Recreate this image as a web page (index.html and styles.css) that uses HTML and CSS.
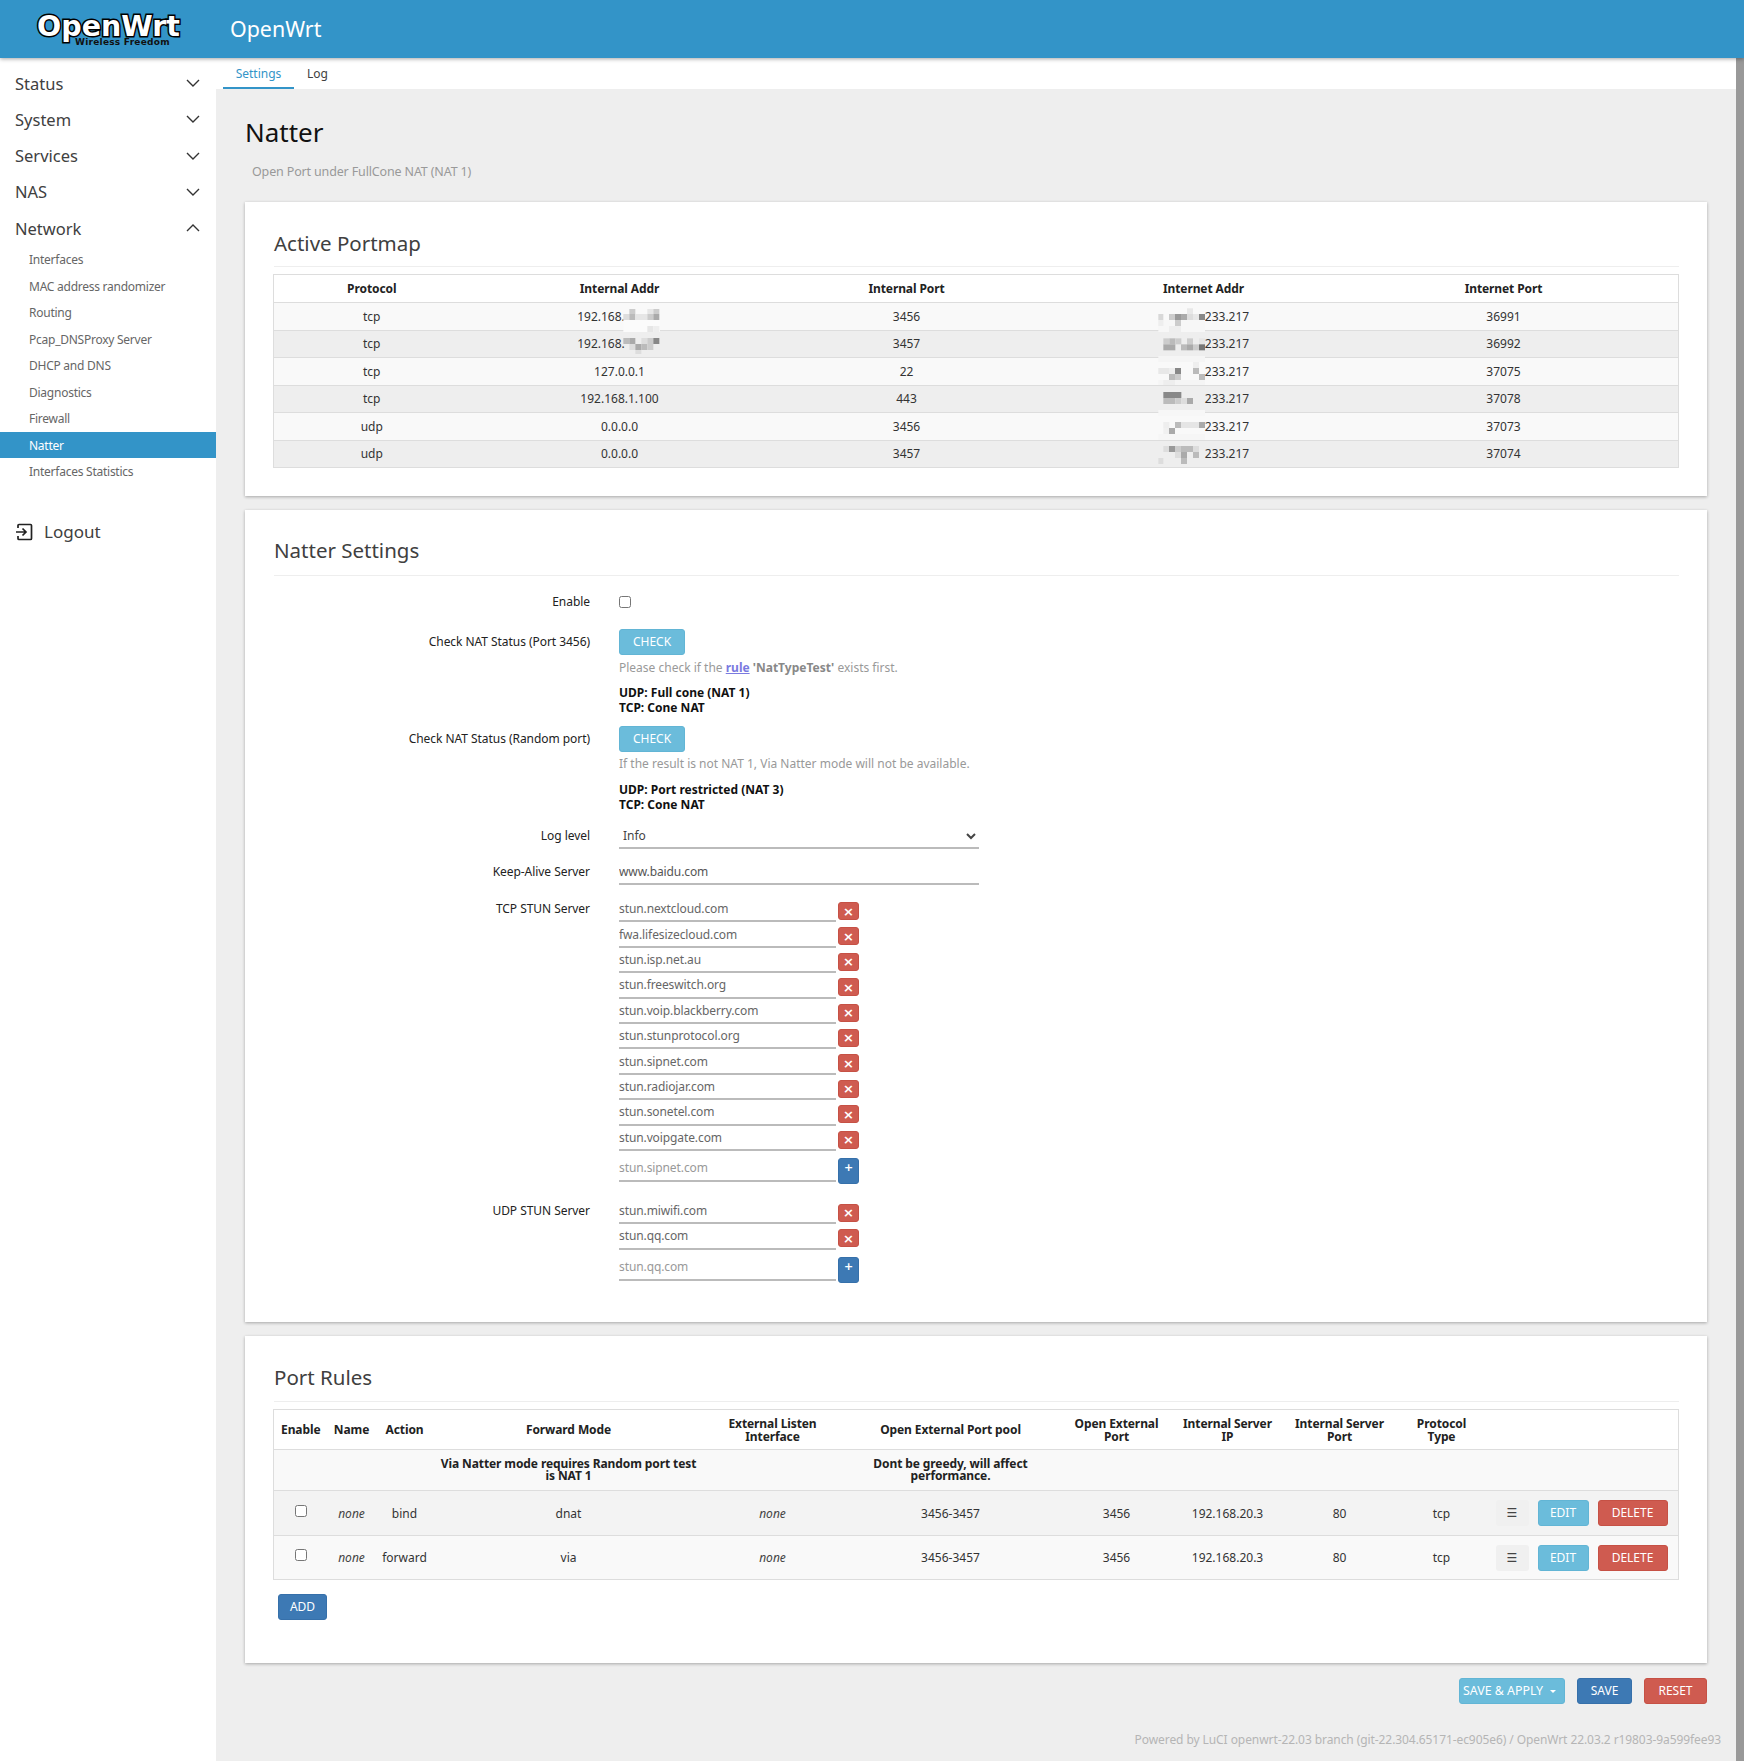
FILE: index.html
```html
<!DOCTYPE html>
<html lang="en">
<head>
<meta charset="utf-8">
<title>Natter - OpenWrt</title>
<link rel="stylesheet" href="styles.css">
</head>
<body>
<header class="topbar">
  <a class="logo"><span class="logo-main">OpenWrt</span><span class="logo-sub">Wireless Freedom</span></a>
  <span class="hostname">OpenWrt</span>
</header>
<div class="shell">
  <nav class="sidebar">
    <ul class="menu">
      <li class="menu-item">Status<svg class="chev" viewBox="0 0 14 8"><polyline points="1,1 7,7 13,1"/></svg></li>
      <li class="menu-item">System<svg class="chev" viewBox="0 0 14 8"><polyline points="1,1 7,7 13,1"/></svg></li>
      <li class="menu-item">Services<svg class="chev" viewBox="0 0 14 8"><polyline points="1,1 7,7 13,1"/></svg></li>
      <li class="menu-item">NAS<svg class="chev" viewBox="0 0 14 8"><polyline points="1,1 7,7 13,1"/></svg></li>
      <li class="menu-item">Network<svg class="chev" viewBox="0 0 14 8"><polyline points="1,7 7,1 13,7"/></svg></li>
    </ul>
    <ul class="submenu">
      <li>Interfaces</li>
      <li>MAC address randomizer</li>
      <li>Routing</li>
      <li>Pcap_DNSProxy Server</li>
      <li>DHCP and DNS</li>
      <li>Diagnostics</li>
      <li>Firewall</li>
      <li class="active">Natter</li>
      <li>Interfaces Statistics</li>
    </ul>
    <div class="logout">
      <svg class="logout-icon" viewBox="0 0 18 18"><path d="M3 5V2.500A1 1 0 0 1 4 1.500H15.500A1 1 0 0 1 16.500 2.500V15.500A1 1 0 0 1 15.500 16.500H4A1 1 0 0 1 3 15.500V13"/><path d="M1 9H11M7.500 5.500L11 9L7.500 12.500"/></svg>
      <span>Logout</span>
    </div>
  </nav>
  <main class="main">
    <ul class="tabs">
      <li class="tab tab-active">Settings</li>
      <li class="tab">Log</li>
    </ul>
    <div class="content">
      <h2 class="page-title">Natter</h2>
      <p class="page-desc">Open Port under FullCone NAT (NAT 1)</p>

      <section class="card card-portmap">
        <h3 class="card-title">Active Portmap</h3>
        <div class="table-wrap">
          <table class="table portmap">
            <colgroup><col class="p1"><col class="p2"><col class="p3"><col class="p4"><col class="p5"><col class="p6"></colgroup>
            <thead><tr><th>Protocol</th><th>Internal Addr</th><th>Internal Port</th><th>Internet Addr</th><th>Internet Port</th><th></th></tr></thead>
            <tbody>
              <tr><td>tcp</td><td>192.168.<span class="mask-a"></span></td><td>3456</td><td><span class="mask-b"></span>233.217</td><td>36991</td><td></td></tr>
              <tr><td>tcp</td><td>192.168.<span class="mask-a"></span></td><td>3457</td><td><span class="mask-b"></span>233.217</td><td>36992</td><td></td></tr>
              <tr><td>tcp</td><td>127.0.0.1</td><td>22</td><td><span class="mask-b"></span>233.217</td><td>37075</td><td></td></tr>
              <tr><td>tcp</td><td>192.168.1.100</td><td>443</td><td><span class="mask-b"></span>233.217</td><td>37078</td><td></td></tr>
              <tr><td>udp</td><td>0.0.0.0</td><td>3456</td><td><span class="mask-b"></span>233.217</td><td>37073</td><td></td></tr>
              <tr><td>udp</td><td>0.0.0.0</td><td>3457</td><td><span class="mask-b"></span>233.217</td><td>37074</td><td></td></tr>
            </tbody>
          </table>
          <svg class="mosaic mosaic-lan" viewBox="0 0 300 180">
            <rect x="160" y="60" width="110" height="36" fill="#fbfbfb"/>
            <g>
              <rect x="178" y="27" width="18" height="15" fill="#ccc"/><rect x="160" y="42" width="18" height="18" fill="#ddd"/><rect x="178" y="42" width="18" height="18" fill="#bbb"/><rect x="196" y="42" width="36" height="18" fill="#e6e6e6"/><rect x="232" y="27" width="18" height="15" fill="#e6e6e6"/><rect x="232" y="42" width="18" height="18" fill="#ccc"/><rect x="250" y="27" width="18" height="15" fill="#ccc"/><rect x="250" y="42" width="18" height="18" fill="#aaa"/>
              <rect x="232" y="78" width="18" height="18" fill="#e6e6e6"/><rect x="250" y="78" width="18" height="18" fill="#eee"/>
              <rect x="160" y="114" width="18" height="18" fill="#bbb"/><rect x="178" y="114" width="18" height="18" fill="#aaa"/><rect x="214" y="114" width="18" height="18" fill="#ddd"/><rect x="232" y="114" width="18" height="18" fill="#ccc"/><rect x="250" y="114" width="18" height="18" fill="#888"/>
              <rect x="178" y="132" width="18" height="18" fill="#ddd"/><rect x="196" y="132" width="18" height="18" fill="#aaa"/><rect x="214" y="132" width="18" height="18" fill="#bbb"/><rect x="232" y="132" width="18" height="18" fill="#ccc"/><rect x="196" y="150" width="18" height="12" fill="#ddd"/>
            </g>
          </svg>
          <svg class="mosaic mosaic-wan" viewBox="0 0 210 510">
            <rect x="25" y="60" width="140" height="36" fill="#f7f7f7"/><rect x="25" y="168" width="140" height="18" fill="#f5f5f5"/><rect x="25" y="240" width="140" height="15" fill="#f5f5f5"/><rect x="25" y="330" width="140" height="18" fill="#f7f7f7"/><rect x="25" y="402" width="140" height="18" fill="#f6f6f6"/>
            <rect x="25" y="42" width="15" height="18" fill="#d8d8d8"/><rect x="57" y="42" width="18" height="18" fill="#ccc"/><rect x="75" y="42" width="18" height="18" fill="#999"/><rect x="93" y="42" width="18" height="18" fill="#aaa"/><rect x="111" y="25" width="18" height="17" fill="#e8e8e8"/><rect x="111" y="42" width="18" height="18" fill="#ddd"/><rect x="129" y="42" width="18" height="18" fill="#e8e8e8"/><rect x="147" y="42" width="18" height="18" fill="#888"/><rect x="75" y="60" width="18" height="18" fill="#ccc"/><rect x="25" y="60" width="15" height="18" fill="#eee"/>
            <rect x="57" y="78" width="36" height="18" fill="#eee"/>
            <rect x="40" y="115" width="18" height="18" fill="#ccc"/><rect x="58" y="115" width="18" height="18" fill="#bbb"/><rect x="76" y="115" width="18" height="18" fill="#ccc"/><rect x="111" y="115" width="18" height="18" fill="#ccc"/><rect x="147" y="115" width="18" height="18" fill="#e5e5e5"/><rect x="40" y="133" width="36" height="18" fill="#aaa"/><rect x="93" y="133" width="18" height="18" fill="#bbb"/><rect x="111" y="133" width="18" height="18" fill="#aaa"/><rect x="129" y="133" width="18" height="18" fill="#ccc"/><rect x="147" y="133" width="18" height="18" fill="#777"/>
            <rect x="25" y="204" width="32" height="18" fill="#e8e8e8"/><rect x="57" y="204" width="18" height="18" fill="#eee"/><rect x="75" y="204" width="18" height="18" fill="#888"/><rect x="129" y="204" width="18" height="18" fill="#bbb"/><rect x="129" y="186" width="18" height="18" fill="#eee"/><rect x="57" y="222" width="18" height="18" fill="#bbb"/><rect x="75" y="222" width="18" height="18" fill="#ccc"/><rect x="147" y="222" width="18" height="18" fill="#bbb"/><rect x="40" y="240" width="35" height="15" fill="#eee"/>
            <rect x="40" y="276" width="54" height="18" fill="#888"/><rect x="40" y="294" width="36" height="18" fill="#bbb"/><rect x="76" y="294" width="18" height="18" fill="#ccc"/><rect x="94" y="294" width="17" height="18" fill="#ddd"/><rect x="111" y="294" width="18" height="18" fill="#aaa"/>
            <rect x="40" y="366" width="18" height="18" fill="#eee"/><rect x="75" y="366" width="18" height="18" fill="#bbb"/><rect x="93" y="366" width="54" height="18" fill="#e5e5e5"/><rect x="147" y="366" width="18" height="18" fill="#aaa"/><rect x="57" y="384" width="18" height="18" fill="#aaa"/><rect x="40" y="384" width="17" height="18" fill="#f0f0f0"/>
            <rect x="40" y="438" width="17" height="18" fill="#ddd"/><rect x="57" y="438" width="18" height="18" fill="#999"/><rect x="75" y="438" width="18" height="18" fill="#ccc"/><rect x="93" y="438" width="36" height="18" fill="#bbb"/><rect x="129" y="438" width="18" height="18" fill="#ddd"/><rect x="75" y="456" width="18" height="18" fill="#ddd"/><rect x="93" y="456" width="18" height="18" fill="#aaa"/><rect x="129" y="456" width="18" height="18" fill="#bbb"/><rect x="25" y="474" width="15" height="18" fill="#ddd"/><rect x="93" y="474" width="18" height="18" fill="#bbb"/>
          </svg>
        </div>
      </section>

      <section class="card card-settings">
        <h3 class="card-title card-title-settings">Natter Settings</h3>
        <div class="field field-enable">
          <label class="field-label">Enable</label>
          <div class="field-body"><input class="check" type="checkbox"></div>
        </div>
        <div class="field field-nat1">
          <label class="field-label label-btn">Check NAT Status (Port 3456)</label>
          <div class="field-body">
            <button class="btn btn-info btn-check">CHECK</button>
            <div class="help help-1">Please check if the <a class="help-link">rule</a> <b>'NatTypeTest'</b> exists first.</div>
            <div class="nat-result result-1">UDP: Full cone (NAT 1)<br>TCP: Cone NAT</div>
          </div>
        </div>
        <div class="field field-nat2">
          <label class="field-label label-btn">Check NAT Status (Random port)</label>
          <div class="field-body">
            <button class="btn btn-info btn-check">CHECK</button>
            <div class="help help-2">If the result is not NAT 1, Via Natter mode will not be available.</div>
            <div class="nat-result result-2">UDP: Port restricted (NAT 3)<br>TCP: Cone NAT</div>
          </div>
        </div>
        <div class="field field-log">
          <label class="field-label label-btn">Log level</label>
          <div class="field-body"><select class="select"><option>Info</option></select></div>
        </div>
        <div class="field field-keep">
          <label class="field-label label-btn">Keep-Alive Server</label>
          <div class="field-body"><input class="text wide" value="www.baidu.com"></div>
        </div>
        <div class="field field-tcp">
          <label class="field-label label-list">TCP STUN Server</label>
          <div class="field-body">
            <div class="dyn"><input class="text dyn-input" value="stun.nextcloud.com"><button class="dyn-btn dyn-rm">×</button></div>
            <div class="dyn"><input class="text dyn-input" value="fwa.lifesizecloud.com"><button class="dyn-btn dyn-rm">×</button></div>
            <div class="dyn"><input class="text dyn-input" value="stun.isp.net.au"><button class="dyn-btn dyn-rm">×</button></div>
            <div class="dyn"><input class="text dyn-input" value="stun.freeswitch.org"><button class="dyn-btn dyn-rm">×</button></div>
            <div class="dyn"><input class="text dyn-input" value="stun.voip.blackberry.com"><button class="dyn-btn dyn-rm">×</button></div>
            <div class="dyn"><input class="text dyn-input" value="stun.stunprotocol.org"><button class="dyn-btn dyn-rm">×</button></div>
            <div class="dyn"><input class="text dyn-input" value="stun.sipnet.com"><button class="dyn-btn dyn-rm">×</button></div>
            <div class="dyn"><input class="text dyn-input" value="stun.radiojar.com"><button class="dyn-btn dyn-rm">×</button></div>
            <div class="dyn"><input class="text dyn-input" value="stun.sonetel.com"><button class="dyn-btn dyn-rm">×</button></div>
            <div class="dyn"><input class="text dyn-input" value="stun.voipgate.com"><button class="dyn-btn dyn-rm">×</button></div>
            <div class="dyn dyn-add"><input class="text dyn-input" placeholder="stun.sipnet.com"><button class="dyn-btn dyn-plus">+</button></div>
          </div>
        </div>
        <div class="field field-udp">
          <label class="field-label label-list">UDP STUN Server</label>
          <div class="field-body">
            <div class="dyn"><input class="text dyn-input" value="stun.miwifi.com"><button class="dyn-btn dyn-rm">×</button></div>
            <div class="dyn"><input class="text dyn-input" value="stun.qq.com"><button class="dyn-btn dyn-rm">×</button></div>
            <div class="dyn dyn-add"><input class="text dyn-input" placeholder="stun.qq.com"><button class="dyn-btn dyn-plus">+</button></div>
          </div>
        </div>
      </section>

      <section class="card card-rules">
        <h3 class="card-title">Port Rules</h3>
        <table class="table rules">
          <colgroup><col class="r1"><col class="r2"><col class="r3"><col class="r4"><col class="r5"><col class="r6"><col class="r7"><col class="r8"><col class="r9"><col class="r10"><col class="r11"></colgroup>
          <thead>
            <tr><th>Enable</th><th>Name</th><th>Action</th><th>Forward Mode</th><th>External Listen<br>Interface</th><th>Open External Port pool</th><th>Open External<br>Port</th><th>Internal Server<br>IP</th><th>Internal Server<br>Port</th><th>Protocol<br>Type</th><th></th></tr>
          </thead>
          <tbody>
            <tr class="desc-row"><td></td><td></td><td></td><td class="wide-desc">Via Natter mode requires Random port test<br>is NAT 1</td><td></td><td>Dont be greedy, will affect<br>performance.</td><td></td><td></td><td></td><td></td><td></td></tr>
            <tr class="rule-row rule-a"><td><input class="check" type="checkbox"></td><td><em>none</em></td><td>bind</td><td>dnat</td><td><em>none</em></td><td>3456-3457</td><td>3456</td><td>192.168.20.3</td><td>80</td><td>tcp</td><td class="row-actions"><span class="handle">☰</span><button class="btn btn-info btn-edit">EDIT</button><button class="btn btn-danger btn-delete">DELETE</button></td></tr>
            <tr class="rule-row rule-b"><td><input class="check" type="checkbox"></td><td><em>none</em></td><td>forward</td><td>via</td><td><em>none</em></td><td>3456-3457</td><td>3456</td><td>192.168.20.3</td><td>80</td><td>tcp</td><td class="row-actions"><span class="handle">☰</span><button class="btn btn-info btn-edit">EDIT</button><button class="btn btn-danger btn-delete">DELETE</button></td></tr>
          </tbody>
        </table>
        <button class="btn btn-primary btn-add">ADD</button>
      </section>

      <div class="page-actions">
        <button class="btn btn-info btn-apply">SAVE &amp; APPLY<span class="caret"></span></button>
        <button class="btn btn-primary btn-save">SAVE</button>
        <button class="btn btn-danger btn-reset">RESET</button>
      </div>
    </div>
    <footer class="footer">Powered by LuCI openwrt-22.03 branch (git-22.304.65171-ec905e6) / OpenWrt 22.03.2 r19803-9a599fee93</footer>
  </main>
  <div class="scrollbar"></div>
</div>
</body>
</html>
```
FILE: styles.css
```css
* { box-sizing: border-box; }
html, body { margin: 0; padding: 0; }
body {
  width: 1744px;
  height: 1761px;
  overflow: hidden;
  background: #fff;
  font-family: "Noto Sans", "Open Sans", sans-serif;
  font-size: 12px;
  color: #404040;
}
ul { list-style: none; margin: 0; padding: 0; }

/* header */
.topbar {
  position: relative;
  z-index: 2;
  height: 58px;
  background: #3394c8;
  box-shadow: 0 1px 4px rgba(0,0,0,.35);
  display: flex;
  align-items: center;
  color: #fff;
}
.logo { position: relative; display: block; width: 230px; height: 58px; flex: none; }
.logo-main {
  position: absolute;
  left: 37px;
  top: 8px;
  font: bold 28.5px/38px "DejaVu Sans", sans-serif;
  color: #fff;
  -webkit-text-stroke: 3px #000;
  paint-order: stroke fill;
}
.logo-sub {
  position: absolute;
  left: 75px;
  top: 36px;
  font: bold 9px/12px "DejaVu Sans", sans-serif;
  letter-spacing: .25px;
  color: #111;
  white-space: nowrap;
}
.hostname { font-size: 21.4px; line-height: 28px; }

/* layout */
.shell { display: flex; height: 1703px; }
.sidebar { width: 216px; flex: none; padding-top: 7px; background: #fff; }
.main { width: 1520px; flex: none; background: #eee; }
.scrollbar { width: 8px; flex: none; background: #999; }

/* sidebar */
.menu-item {
  height: 36.25px;
  padding-left: 15px;
  display: flex;
  align-items: center;
  justify-content: space-between;
  font-size: 16.5px;
  color: #404040;
}
.chev { width: 14px; height: 8px; margin-right: 16px; fill: none; stroke: #333; stroke-width: 1.4; }
.submenu li {
  height: 26.5px;
  padding: 1px 0 0 29px;
  line-height: 26.5px;
  font-size: 12px;
  letter-spacing: -.25px;
  color: #666;
}
.submenu li.active { background: #3394c8; color: #fff; }
.logout {
  margin-top: 29px;
  height: 36px;
  padding-left: 15px;
  display: flex;
  align-items: center;
  gap: 11px;
  font-size: 17px;
  color: #404040;
}
.logout-icon { width: 18px; height: 18px; fill: none; stroke: #222; stroke-width: 1.7; }

/* tabs */
.tabs { display: flex; height: 31px; padding-left: 7px; background: #fff; }
.tab { padding: 1px 14px 0; line-height: 30px; font-size: 12px; color: #404040; }
.tab-active { width: 71px; text-align: center; padding: 1px 0 0; margin-right: 13px; color: #3394c8; border-bottom: 2px solid #3394c8; }
.tab:last-child { padding: 1px 0 0; }

/* content */
.content { padding: 0 29px; }
.page-title { margin: 26px 0 0; font-size: 26px; line-height: 34px; font-weight: 400; color: #111; }
.page-desc { margin: 14px 0 0 7px; font-size: 12.5px; letter-spacing: -.15px; line-height: 18px; color: #999; }
.card { background: #fff; padding: 28px 28px 0; box-shadow: 0 1px 3px rgba(0,0,0,.3); }
.card-portmap { margin-top: 21px; padding-bottom: 28px; }
.card-settings { margin-top: 14px; padding-top: 27px; padding-bottom: 38px; height: 812px; }
.card-rules { margin-top: 14px; height: 327px; }
.card-title {
  margin: 0 0 7px 1px;
  font-size: 20.5px;
  line-height: 26px;
  font-weight: 400;
  padding-bottom: 10px;
  border-bottom: 1px solid #eee;
  color: #404040;
}
.card-title-settings { margin-bottom: 0; padding-bottom: 12px; }
.card-rules .card-title { padding-bottom: 11px; }

/* tables */
.table-wrap { position: relative; }
.table {
  width: 1405px;
  table-layout: fixed;
  border-collapse: collapse;
  font-size: 12px;
  color: #333;
  border: 1px solid #ddd;
}
.table th { font-weight: 700; text-align: center; padding: 0; color: #222; letter-spacing: -.1px; }
.table td { text-align: center; padding: 0; }
.portmap th { height: 28px; border-bottom: 1px solid #ddd; }
.portmap td { height: 27.5px; border-bottom: 1px solid #ddd; }
.portmap tbody tr:nth-child(odd) { background: #f9f9f9; }
.portmap tbody tr:nth-child(even) { background: #eee; }
.p1 { width: 196px; } .p2 { width: 300px; } .p3 { width: 274px; } .p4 { width: 320px; } .p5 { width: 280px; } .p6 { width: 35px; }
.mask-a { display: inline-block; width: 37px; }
.mask-b { display: inline-block; width: 47px; }
.mosaic { position: absolute; pointer-events: none; }
.mosaic-lan { left: 297px; top: 26px; width: 100px; height: 60px; }
.mosaic-wan { left: 877px; top: 26px; width: 70px; height: 170px; }

.rules th { height: 40px; line-height: 13px; border-bottom: 1px solid #ddd; }
.rules td { border-bottom: 1px solid #ddd; }
.desc-row { background: #f9f9f9; }
.desc-row td { height: 41px; font-weight: 700; line-height: 12.5px; color: #222; letter-spacing: -.1px; }
.rule-a { background: #f3f3f3; }
.rule-b { background: #f9f9f9; }
.rule-a td { height: 45px; }
.rule-b td { height: 44px; }
.rule-row em { font-style: italic; color: #444; }
.r1 { width: 54px; } .r2 { width: 48px; } .r3 { width: 58px; } .r4 { width: 270px; } .r5 { width: 138px; } .r6 { width: 218px; }
.r7 { width: 114px; } .r8 { width: 108px; } .r9 { width: 116px; } .r10 { width: 88px; } .r11 { width: 193px; }
.rule-row .check { position: relative; top: -1px; }
.rules .row-actions { text-align: left; padding-left: 10px; white-space: nowrap; font-size: 0; }
.handle {
  display: inline-block;
  width: 33px;
  height: 26px;
  margin-right: 9px;
  background: #f0f0f0;
  border-radius: 3px;
  text-align: center;
  font: 12px/26px "DejaVu Sans", sans-serif;
  color: #444;
  vertical-align: middle;
}

/* buttons */
.btn {
  display: inline-block;
  height: 26px;
  padding: 0;
  border: 1px solid transparent;
  border-radius: 3px;
  color: #fff;
  font: 12px/24px "Noto Sans", sans-serif;
  text-align: center;
  vertical-align: middle;
}
.btn-info { background: #6bbcdb; border-color: #62b5d5; }
.btn-primary { background: #3d79b4; border-color: #3670aa; }
.btn-danger { background: #cf5b50; border-color: #c65145; }
.btn-check { width: 66px; display: block; }
.btn-edit { width: 51px; margin-right: 9px; }
.btn-delete { width: 70px; }
.btn-add { width: 49px; margin: 14px 0 0 5px; display: block; }
.btn-apply { width: 106px; text-align: left; padding-left: 3px; font-size: 12.4px; }
.btn-save { width: 55px; }
.btn-reset { width: 63px; }
.caret { display: inline-block; margin-left: 7px; border: 3px solid transparent; border-top-color: #fff; border-bottom-width: 0; vertical-align: middle; }
.page-actions { margin-top: 15px; display: flex; justify-content: flex-end; gap: 12px; }
.footer { margin-top: 27px; padding-right: 15px; text-align: right; font-size: 12px; letter-spacing: -.08px; line-height: 18px; color: #b5b5b5; }

/* form */
.field { display: grid; grid-template-columns: 317px 1fr; column-gap: 29px; font-size: 12px; color: #333; }
.field-label { text-align: right; line-height: 16px; color: #222; letter-spacing: -.05px; }
.label-btn { line-height: 26px; }
.label-list { line-height: 24px; }
.field-enable { margin-top: 18px; }
.field-enable .field-body { display: flex; align-items: center; height: 16px; }
.check { width: 12px; height: 12px; margin: 0; }
.field-nat1 { margin-top: 19px; }
.field-nat2 { margin-top: 11px; }
.field-log { margin-top: 11px; }
.field-keep { margin-top: 10px; }
.field-tcp { margin-top: 12px; }
.field-udp { margin-top: 15px; }
.help { line-height: 18px; color: #999; }
.help b { color: #888; }
.help-link { color: #7a7ae0; font-weight: 700; text-decoration: underline; }
.help-1 { margin-top: 4px; }
.help-2 { margin-top: 3px; }
.nat-result { font-weight: 700; line-height: 15px; color: #111; }
.result-1 { margin-top: 8px; }
.result-2 { margin-top: 9px; }
.select {
  display: block;
  width: 360px;
  height: 26px;
  padding: 0;
  border: 0;
  border-bottom: 2px solid #bbb;
  background: #fff;
  font: 12px "Noto Sans", sans-serif;
  color: #444;
  outline: 0;
}
.text {
  display: block;
  height: 25.4px;
  padding: 0;
  border: 0;
  border-bottom: 2px solid #bbb;
  background: transparent;
  font: 12px "Noto Sans", sans-serif;
  letter-spacing: -.1px;
  color: #666;
  outline: 0;
}
.text::placeholder { color: #999; opacity: 1; }
.wide { width: 360px; color: #555; height: 26px; }
.dyn { display: flex; height: 25.4px; }
.dyn-input { width: 217px; flex: none; }
.dyn-btn {
  width: 21px;
  margin-left: 2px;
  padding: 0;
  border: 1px solid transparent;
  border-radius: 3px;
  color: #fff;
  font: bold 13px/15px "DejaVu Sans", sans-serif;
}
.dyn-rm { height: 18px; margin-top: 5px; background: #cf5b50; border-color: #c65145; }
.dyn-add { height: 29px; margin-top: 4px; }
.dyn-add .dyn-input { height: 27px; }
.dyn-plus { height: 26px; margin-top: 3px; background: #3d79b4; border-color: #3670aa; padding-bottom: 7px; font-size: 11px; }
```
